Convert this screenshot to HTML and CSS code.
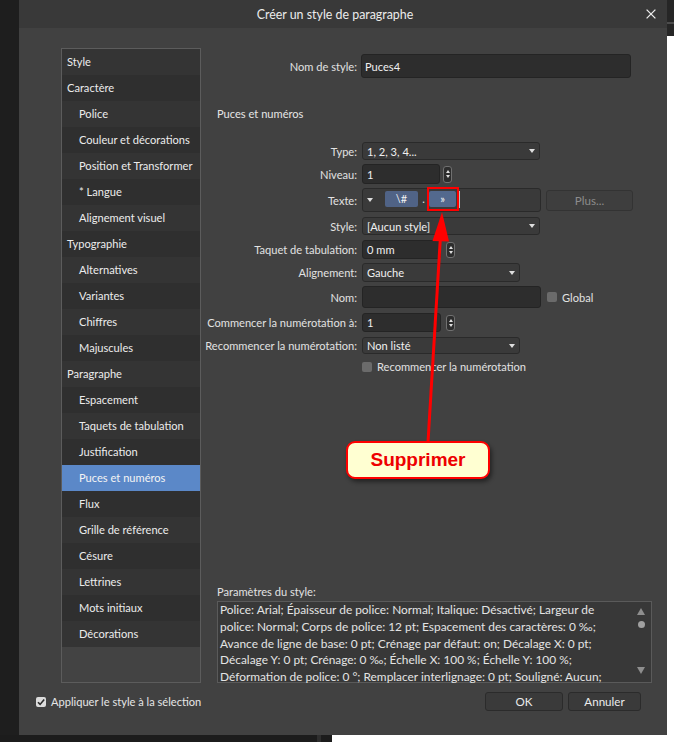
FILE: index.html
```html
<!DOCTYPE html>
<html lang="fr">
<head>
<meta charset="utf-8">
<title>Créer un style de paragraphe</title>
<link rel="stylesheet" href="styles.css">
</head>
<body>
<div class="screen">
  <div class="dialog">
    <header class="titlebar">
      <div class="title">Créer un style de paragraphe</div>
      <svg class="close" viewBox="0 0 10 10" width="10" height="10"><path d="M0.6 0.6L9.4 9.4M9.4 0.6L0.6 9.4" stroke="#ececec" stroke-width="1.3" fill="none"/></svg>
    </header>
    <div class="content">
      <div class="body">
        <nav class="sidebar">
          <ul class="nav">
            <li class="nav-item">Style</li>
            <li class="nav-item">Caractère</li>
            <li class="nav-item sub">Police</li>
            <li class="nav-item sub">Couleur et décorations</li>
            <li class="nav-item sub">Position et Transformer</li>
            <li class="nav-item sub">* Langue</li>
            <li class="nav-item sub">Alignement visuel</li>
            <li class="nav-item">Typographie</li>
            <li class="nav-item sub">Alternatives</li>
            <li class="nav-item sub">Variantes</li>
            <li class="nav-item sub">Chiffres</li>
            <li class="nav-item sub">Majuscules</li>
            <li class="nav-item">Paragraphe</li>
            <li class="nav-item sub">Espacement</li>
            <li class="nav-item sub">Taquets de tabulation</li>
            <li class="nav-item sub">Justification</li>
            <li class="nav-item sub active">Puces et numéros</li>
            <li class="nav-item sub">Flux</li>
            <li class="nav-item sub">Grille de référence</li>
            <li class="nav-item sub">Césure</li>
            <li class="nav-item sub">Lettrines</li>
            <li class="nav-item sub">Mots initiaux</li>
            <li class="nav-item sub">Décorations</li>
          </ul>
        </nav>
        <section class="panel">
          <div class="frow row-name">
            <span class="lbl">Nom de style:</span>
            <div class="input w-name">Puces4</div>
          </div>
          <h2 class="section-title">Puces et numéros</h2>
          <div class="form">
            <div class="frow h18">
              <span class="lbl">Type:</span>
              <div class="select w178"><span>1, 2, 3, 4...</span><i class="tri"></i></div>
            </div>
            <div class="frow h20 mt4">
              <span class="lbl">Niveau:</span>
              <div class="input w78">1</div>
              <span class="spin"><i class="up"></i><i class="down"></i></span>
            </div>
            <div class="frow h24 mt4">
              <span class="lbl">Texte:</span>
              <div class="textfield">
                <i class="tri tri-left"></i>
                <span class="token t1">\#</span><span class="dot">.</span><span class="token t2">»</span><span class="cursor"></span>
              </div>
              <button class="btn-plus" disabled>Plus...</button>
            </div>
            <div class="frow h18 mt5">
              <span class="lbl">Style:</span>
              <div class="select w178"><span>[Aucun style]</span><i class="tri"></i></div>
            </div>
            <div class="frow h19 mt5">
              <span class="lbl">Taquet de tabulation:</span>
              <div class="input w79">0 mm</div>
              <span class="spin spin2"><i class="up"></i><i class="down"></i></span>
            </div>
            <div class="frow h19 mt4">
              <span class="lbl">Alignement:</span>
              <div class="select w158"><span>Gauche</span><i class="tri"></i></div>
            </div>
            <div class="frow h22 mt4">
              <span class="lbl">Nom:</span>
              <div class="input w179"></div>
              <span class="checkbox cb-global"></span><span class="cb-text">Global</span>
            </div>
            <div class="frow h19 mt5">
              <span class="lbl">Commencer la numérotation à:</span>
              <div class="input w79">1</div>
              <span class="spin spin2"><i class="up"></i><i class="down"></i></span>
            </div>
            <div class="frow h17 mt5">
              <span class="lbl">Recommencer la numérotation:</span>
              <div class="select w158"><span>Non listé</span><i class="tri"></i></div>
            </div>
            <div class="frow h11 mt7">
              <span class="lbl"></span>
              <span class="checkbox"></span><span class="cb-text">Recommencer la numérotation</span>
            </div>
          </div>
          <div class="params">
            <div class="params-label">Paramètres du style:</div>
            <div class="params-box">
              <div class="params-text">
                <span class="pline">Police: Arial; Épaisseur de police: Normal; Italique: Désactivé; Largeur de</span>
                <span class="pline">police: Normal; Corps de police: 12 pt; Espacement des caractères: 0 ‰;</span>
                <span class="pline">Avance de ligne de base: 0 pt; Crénage par défaut: on; Décalage X: 0 pt;</span>
                <span class="pline">Décalage Y: 0 pt; Crénage: 0 ‰; Échelle X: 100 %; Échelle Y: 100 %;</span>
                <span class="pline">Déformation de police: 0 °; Remplacer interlignage: 0 pt; Souligné: Aucun;</span>
              </div>
              <div class="scrollbar">
                <i class="sb-up"></i>
                <i class="sb-thumb"></i>
                <i class="sb-space"></i>
                <i class="sb-down"></i>
              </div>
            </div>
          </div>
        </section>
      </div>
      <footer class="footer">
        <div class="apply">
          <span class="checkbox checked"><svg viewBox="0 0 10 10" width="10" height="10"><path d="M2 5.2L4.1 7.4L8.2 2.4" stroke="#2a2a2a" stroke-width="1.6" fill="none"/></svg></span>
          <span class="apply-text">Appliquer le style à la sélection</span>
        </div>
        <div class="buttons">
          <button class="btn btn-ok">OK</button>
          <button class="btn btn-cancel">Annuler</button>
        </div>
      </footer>
    </div>
    <svg class="annotation" viewBox="19 0 648 735" width="648" height="735">
      <rect x="428" y="188" width="30" height="22" fill="none" stroke="#ff0000" stroke-width="2"/>
      <line x1="428" y1="442" x2="440.5" y2="236" stroke="#ff0000" stroke-width="3"/>
      <polygon points="442,212 432.5,241 449,241.5" fill="#ff0000"/>
    </svg>
    <div class="callout">Supprimer</div>
  </div>
  <div class="edge-right">
    <div class="er-dark1"></div>
    <div class="er-line"></div>
    <div class="er-dark2"></div>
    <div class="er-white"></div>
  </div>
  <div class="edge-bottom">
    <div class="eb-dark1"></div>
    <div class="eb-gray"></div>
    <div class="eb-dark2"></div>
    <div class="eb-white"></div>
  </div>
</div>
</body>
</html>
```
FILE: styles.css
```css
* { box-sizing: border-box; }
html, body { margin: 0; padding: 0; }
body {
  width: 674px;
  height: 742px;
  overflow: hidden;
  background: #1e1e1e;
  font-family: "Segoe UI", Lato, "Liberation Sans", sans-serif;
  font-size: 11.1px;
  color: #e6e6e6;
}
.screen {
  display: grid;
  grid-template-columns: 19px 648px 7px;
  grid-template-rows: 735px 7px;
}
.dialog {
  grid-column: 2;
  grid-row: 1;
  position: relative;
  background: #414141;
  display: flex;
  flex-direction: column;
}
.titlebar {
  height: 28px;
  flex: none;
  background: #393939;
  display: flex;
  align-items: center;
  padding: 0 11px 0 5px;
}
.title {
  flex: 1;
  text-align: center;
  font-size: 12.4px;
  color: #ececec;
}
.close { flex: none; display: block; margin-top: -1px; }

.content { flex: 1; display: flex; flex-direction: column; }
.body {
  display: flex;
  padding: 20px 0 0 42px;
  height: 655px;
}
.sidebar {
  width: 140px;
  flex: none;
  border: 1px solid #5c5c5c;
  background: #434343;
}
.nav { list-style: none; margin: 0; padding: 0; }
.nav-item {
  height: 26px;
  line-height: 26px;
  padding-left: 5px;
  white-space: nowrap;
  color: #ececec;
  background: #343434;
}
.nav-item:nth-child(even) { background: #2f2f2f; }
.nav-item.sub { padding-left: 17px; }
.nav-item.active { background: #5b88c8; color: #f4f4f4; }

.panel {
  flex: 1;
  display: flex;
  flex-direction: column;
  padding-top: 6px;
}
.frow { display: flex; align-items: center; flex: none; }
.lbl {
  width: 156px;
  flex: none;
  display: flex;
  justify-content: flex-end;
  white-space: nowrap;
  margin-right: 5px;
  color: #e2e2e2;
}
.row-name { height: 24px; }
.row-name .lbl { margin-right: 4px; }
.h11 { height: 11px; }
.h17 { height: 17px; }
.h18 { height: 18px; }
.h19 { height: 19px; }
.h20 { height: 20px; }
.h22 { height: 22px; }
.h24 { height: 24px; }
.mt4 { margin-top: 4px; }
.mt5 { margin-top: 5px; }
.mt7 { margin-top: 7px; }

.section-title {
  margin: 29px 0 0 16px;
  font-size: 11.1px;
  font-weight: normal;
  line-height: 14px;
  color: #e6e6e6;
}
.form { margin-top: 21px; display: flex; flex-direction: column; }

.input {
  height: 100%;
  background: #2d2d2d;
  border: 1px solid #242424;
  border-radius: 3px;
  display: flex;
  align-items: center;
  padding-left: 4px;
  color: #f0f0f0;
}
.w-name { width: 270px; padding-left: 3px; }
.w78 { width: 78px; }
.w79 { width: 79px; }
.w158 { width: 158px; }
.w178 { width: 178px; }
.w179 { width: 179px; }

.select {
  height: 100%;
  background: #3a3a3a;
  border: 1px solid #2a2a2a;
  border-radius: 3px;
  display: flex;
  align-items: center;
  padding-left: 4px;
  color: #f0f0f0;
}
.tri {
  display: block;
  margin-left: auto;
  margin-right: 4px;
  width: 0;
  height: 0;
  border-left: 3.5px solid transparent;
  border-right: 3.5px solid transparent;
  border-top: 4px solid #dedede;
}
.spin {
  width: 9px;
  height: 17px;
  margin-left: 3px;
  border: 1px solid #707070;
  border-radius: 3px;
  background: #2d2d2d;
  display: flex;
  flex-direction: column;
  align-items: center;
  justify-content: center;
  gap: 2px;
}
.spin2 { margin-left: 5px; height: 16px; }
.spin .up, .spin .down {
  display: block;
  width: 0;
  height: 0;
  border-left: 2.5px solid transparent;
  border-right: 2.5px solid transparent;
}
.spin .up { border-bottom: 3px solid #e0e0e0; }
.spin .down { border-top: 3px solid #e0e0e0; }

.textfield {
  width: 179px;
  height: 100%;
  background: #3a3a3a;
  border: 1px solid #2a2a2a;
  border-radius: 3px;
  display: flex;
  align-items: center;
  padding-left: 4px;
}
.tri-left { margin-left: 0; margin-right: 0; }
.token {
  height: 16px;
  background: #506386;
  border-radius: 2px;
  display: flex;
  align-items: center;
  justify-content: center;
  color: #f2f2f2;
  margin-bottom: 3px;
  font-size: 11px;
}
.t1 { width: 33px; margin-left: 12px; }
.t2 { width: 27px; background: #53698e; }
.dot { width: 11px; text-align: center; color: #e0e0e0; margin-bottom: 3px; }
.cursor {
  width: 1px;
  height: 17px;
  margin-left: 3px;
  margin-bottom: 1px;
  background: #bdbdbd;
}
.btn-plus {
  width: 87px;
  height: 21px;
  margin-left: 5px;
  background: #3e3e3e;
  border: 1px solid #333333;
  border-radius: 3px;
  font-family: inherit;
  font-size: 11.6px;
  color: #8c8c8c;
  padding: 0;
}
.checkbox {
  width: 10px;
  height: 10px;
  flex: none;
  border-radius: 2px;
  background: #6b6b6b;
  display: block;
}
.cb-global { margin-left: 6px; }
.cb-text { margin-left: 5px; white-space: nowrap; color: #e2e2e2; }

.params { margin-top: auto; padding: 0 15px 0 16px; }
.params-label { line-height: 14px; color: #e2e2e2; }
.params-box {
  margin-top: 2px;
  height: 82px;
  border: 1px solid #5a5a5a;
  background: #383838;
  display: flex;
}
.params-text {
  flex: 1;
  padding: 0 0 0 2px;
  font-size: 11.9px;
  line-height: 16.8px;
  color: #e4e4e4;
}
.pline { display: block; white-space: nowrap; }
.scrollbar {
  width: 20px;
  flex: none;
  display: flex;
  flex-direction: column;
  align-items: center;
  padding: 6px 0 8px;
}
.sb-up, .sb-down {
  display: block;
  width: 0;
  height: 0;
  border-left: 4px solid transparent;
  border-right: 4px solid transparent;
}
.sb-up { border-bottom: 7px solid #8e8e8e; }
.sb-down { border-top: 7px solid #8e8e8e; }
.sb-thumb {
  display: block;
  width: 7px;
  height: 7px;
  border-radius: 50%;
  background: #a0a0a0;
  margin-top: 6px;
}
.sb-space { display: block; flex: 1; }

.footer {
  display: flex;
  align-items: center;
  height: 19px;
  margin-top: 9px;
  padding: 0 26px 0 17px;
}
.apply { display: flex; align-items: center; }
.checked { background: #dcdcdc; }
.checked svg { display: block; }
.apply-text { margin-left: 5px; color: #e6e6e6; }
.buttons { margin-left: auto; display: flex; gap: 5px; height: 19px; }
.btn {
  height: 19px;
  background: #3a3a3a;
  border: 1px solid #2b2b2b;
  border-radius: 3px;
  font-family: inherit;
  font-size: 11.6px;
  color: #ececec;
  padding: 0;
}
.btn-ok { width: 78px; }
.btn-cancel { width: 73px; }

.annotation {
  position: absolute;
  left: 0;
  top: 0;
  pointer-events: none;
}
.callout {
  position: absolute;
  left: 327px;
  top: 441px;
  width: 144px;
  height: 38px;
  background: #ffffd2;
  border: 2px solid #ff0000;
  border-radius: 9px;
  box-shadow: 2px 3px 4px rgba(0, 0, 0, 0.45);
  display: flex;
  align-items: center;
  justify-content: center;
  font-family: "Liberation Sans", Arial, sans-serif;
  font-weight: bold;
  font-size: 19px;
  color: #ee0000;
}

.edge-right {
  grid-column: 3;
  grid-row: 1 / 3;
  display: flex;
  flex-direction: column;
}
.er-dark1 { height: 22px; background: #262626; }
.er-line { height: 2px; background: #4c4c4c; }
.er-dark2 { height: 12px; background: #262626; }
.er-white { flex: 1; background: #ffffff; }
.edge-bottom {
  grid-column: 1 / 3;
  grid-row: 2;
  display: flex;
}
.eb-dark1 { width: 317px; background: #1c1c1c; }
.eb-gray { width: 4px; background: #2e2e2e; }
.eb-dark2 { width: 11px; background: #1c1c1c; }
.eb-white { flex: 1; background: #ffffff; }
```
